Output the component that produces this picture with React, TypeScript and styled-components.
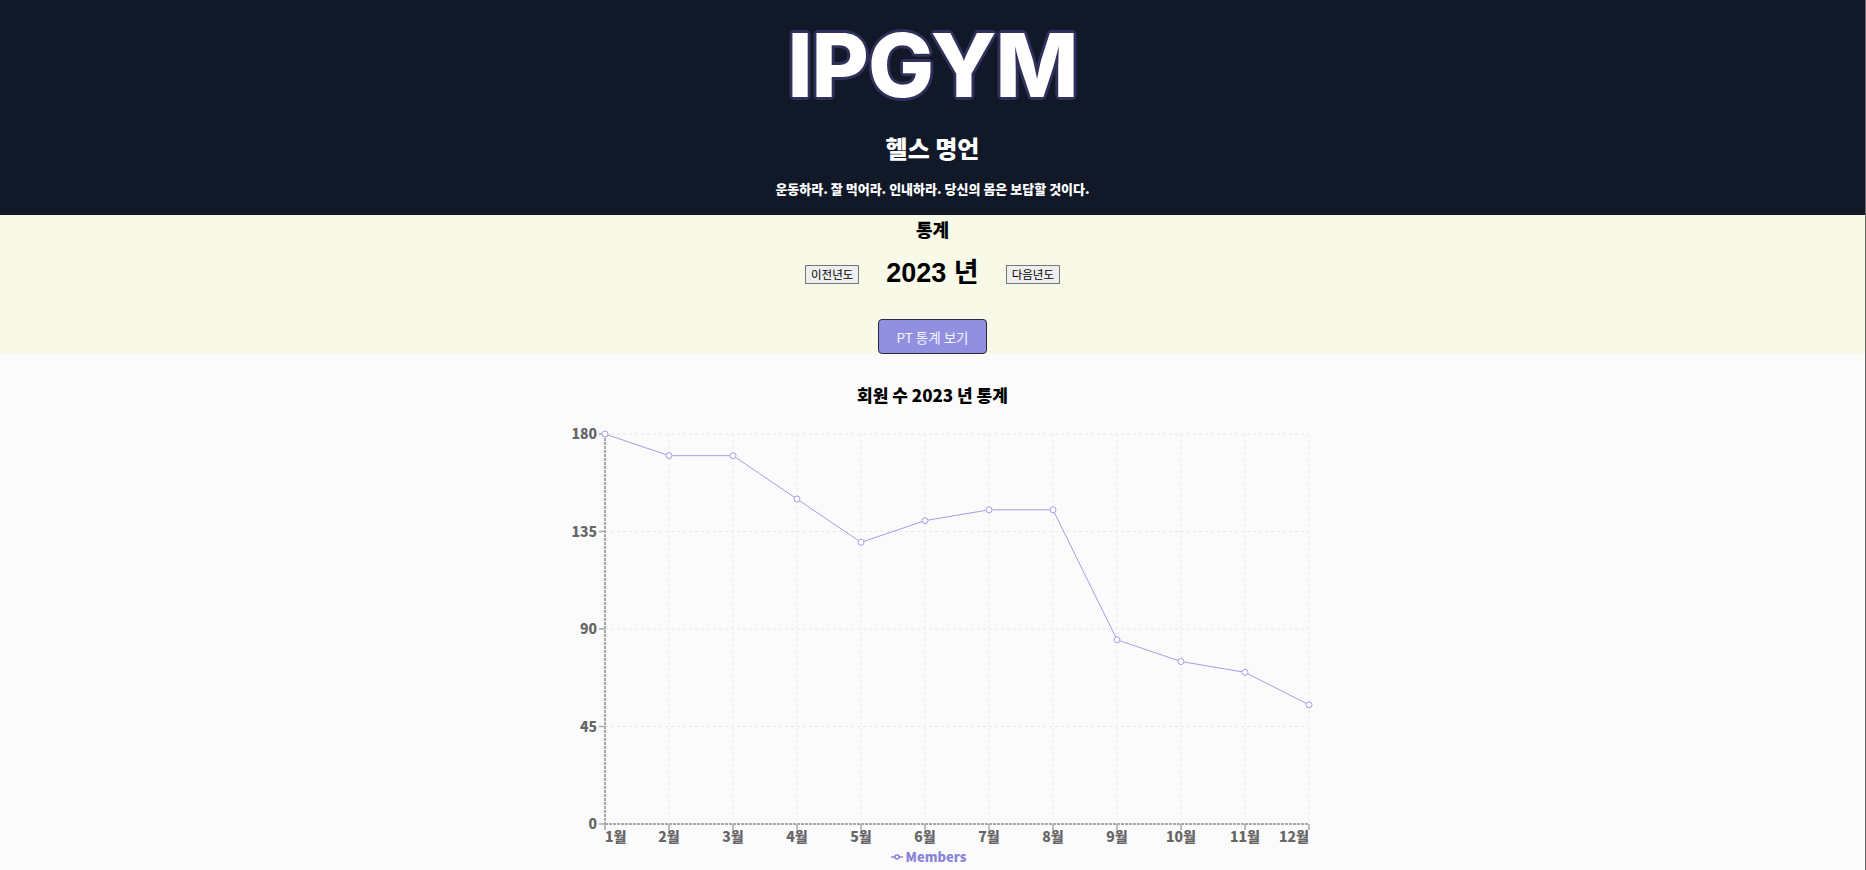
import React from 'react';
import styled, { createGlobalStyle } from 'styled-components';

const GlobalStyle = createGlobalStyle`
  html, body {
    margin: 0;
    padding: 0;
    background: #fbfbfb;
    font-family: 'Noto Sans CJK KR', 'Noto Sans', sans-serif;
  }
  * {
    box-sizing: border-box;
  }
`;

const palette = {
  navy: '#111827',
  cream: '#f9f9e7',
  paper: '#fbfbfb',
  purple: '#8884d8',
  line: '#a29ee9',
};

const Page = styled.div`
  width: 100%;
  min-height: 870px;
  border-right: 1px solid #6b6b6b;
  display: flex;
  flex-direction: column;
`;

const Header = styled.header`
  height: 215px;
  background: ${palette.navy};
  display: flex;
  flex-direction: column;
  align-items: center;
  color: #fff;
`;

const Logo = styled.h1`
  margin: 17px 0 0;
  font-family: Inter, 'Noto Sans', sans-serif;
  font-weight: 800;
  font-size: 88px;
  line-height: 96px;
  letter-spacing: -1px;
  color: #fff;
  text-shadow:
    3px 0 0 #30305a, -3px 0 0 #30305a, 0 3px 0 #30305a, 0 -3px 0 #30305a,
    2px 2px 0 #30305a, -2px 2px 0 #30305a, 2px -2px 0 #30305a, -2px -2px 0 #30305a;
`;

const QuoteTitle = styled.h2`
  margin: 20px 0 0;
  font-size: 24px;
  line-height: 30px;
  font-weight: 900;
`;

const Quote = styled.p`
  margin: 17px 0 0;
  font-size: 13px;
  line-height: 18px;
  font-weight: 900;
`;

const Stats = styled.section`
  height: 139px;
  background: ${palette.cream};
  display: flex;
  flex-direction: column;
  align-items: center;
`;

const StatsTitle = styled.h3`
  margin: 0;
  font-size: 18px;
  line-height: 28px;
  font-weight: 900;
  color: #000;
`;

const YearRow = styled.div`
  margin-top: 14px;
  display: flex;
  align-items: center;
  gap: 27px;
  height: 32px;
`;

const YearButton = styled.button`
  font-family: 'Noto Sans CJK KR', sans-serif;
  font-size: 11.5px;
  line-height: 15px;
  padding: 1px 5px;
  margin-top: 3px;
  background: #efefef;
  border: 1px solid #767676;
  border-radius: 0;
  color: #000;
`;

const Year = styled.h2`
  margin: 0;
  font-family: 'Liberation Sans', 'Noto Sans CJK KR', sans-serif;
  font-size: 27px;
  line-height: 32px;
  font-weight: 700;
  color: #000;
`;

const PtButton = styled.button`
  margin-top: auto;
  width: 109px;
  height: 35px;
  background: #9190e0;
  border: 1px solid #2a2a3a;
  border-radius: 4px;
  color: #f4f4ff;
  font-family: 'Noto Sans CJK KR', sans-serif;
  font-size: 13.5px;
`;

const ChartSection = styled.section`
  flex: 1;
  background: ${palette.paper};
  display: flex;
  flex-direction: column;
  align-items: center;
`;

const ChartTitle = styled.h3`
  margin: 31px 0 9px;
  font-size: 17px;
  line-height: 20px;
  font-weight: 900;
  color: #000;
`;

const ChartSvg = styled.svg`
  display: block;
  overflow: visible;
  font-family: 'Noto Sans CJK KR', sans-serif;
`;

const Legend = styled.div`
  margin-left: -8px;
  display: flex;
  align-items: center;
  gap: 3px;
  height: 14px;
  font-size: 13px;
  font-weight: 900;
  line-height: 14px;
  color: ${palette.purple};
`;

const data = [180, 170, 170, 150, 130, 140, 145, 145, 85, 75, 70, 55];
const yTicks = [0, 45, 90, 135, 180];

const W = 800;
const H = 436;
const X0 = 72;
const X1 = 776;
const Y0 = 410;
const Y1 = 20;

const px = (i: number) => X0 + ((X1 - X0) / 11) * i;
const py = (v: number) => Y0 - ((Y0 - Y1) / 180) * v;

function MembersChart() {
  const points = data.map((v, i) => `${px(i)},${py(v)}`).join(' ');
  return (
    <ChartSvg width={W} height={H} viewBox={`0 0 ${W} ${H}`}>
      <g stroke="#e9e9e9" strokeDasharray="3 3">
        {yTicks.map((t) => (
          <line key={`h${t}`} x1={X0} x2={X1} y1={py(t)} y2={py(t)} />
        ))}
        {data.map((_, i) => (
          <line key={`v${i}`} x1={px(i)} x2={px(i)} y1={Y1} y2={Y0} />
        ))}
      </g>
      <g stroke="#a9a9a9" strokeWidth={2} strokeDasharray="3 1">
        <line x1={X0} x2={X0} y1={Y1} y2={Y0} />
        <line x1={X0} x2={X1} y1={Y0} y2={Y0} />
      </g>
      <g stroke="#a9a9a9" strokeWidth={1.5}>
        {yTicks.map((t) => (
          <line key={`yt${t}`} x1={X0 - 6} x2={X0} y1={py(t)} y2={py(t)} />
        ))}
        {data.map((_, i) => (
          <line key={`xt${i}`} x1={px(i)} x2={px(i)} y1={Y0} y2={Y0 + 6} />
        ))}
      </g>
      <g fill="#666" fontSize={14} fontWeight={900}>
        {yTicks.map((t) => (
          <text key={`yl${t}`} x={X0 - 8} y={py(t)} dy="0.36em" textAnchor="end">
            {t}
          </text>
        ))}
        {data.map((_, i) => (
          <text
            key={`xl${i}`}
            x={px(i)}
            y={Y0 + 18}
            textAnchor={i === 0 ? 'start' : i === 11 ? 'end' : 'middle'}
          >
            {i + 1}월
          </text>
        ))}
      </g>
      <polyline points={points} fill="none" stroke={palette.line} strokeWidth={1} />
      {data.map((v, i) => (
        <circle
          key={`d${i}`}
          cx={px(i)}
          cy={py(v)}
          r={3}
          fill="#fff"
          stroke={palette.line}
          strokeWidth={1}
        />
      ))}
    </ChartSvg>
  );
}

function LegendIcon() {
  return (
    <svg width="12" height="12" viewBox="0 0 32 32">
      <path
        d="M0,16h10.667A5.333,5.333,0,1,1,21.333,16H32M21.333,16A5.333,5.333,0,1,1,10.667,16"
        fill="none"
        stroke={palette.purple}
        strokeWidth={4}
      />
    </svg>
  );
}

export default function App() {
  return (
    <Page>
      <GlobalStyle />
      <Header>
        <Logo>IPGYM</Logo>
        <QuoteTitle>헬스 명언</QuoteTitle>
        <Quote>운동하라. 잘 먹어라. 인내하라. 당신의 몸은 보답할 것이다.</Quote>
      </Header>
      <Stats>
        <StatsTitle>통계</StatsTitle>
        <YearRow>
          <YearButton>이전년도</YearButton>
          <Year>2023 년</Year>
          <YearButton>다음년도</YearButton>
        </YearRow>
        <PtButton>PT 통계 보기</PtButton>
      </Stats>
      <ChartSection>
        <ChartTitle>회원 수 2023 년 통계</ChartTitle>
        <MembersChart />
        <Legend>
          <LegendIcon />
          Members
        </Legend>
      </ChartSection>
    </Page>
  );
}
